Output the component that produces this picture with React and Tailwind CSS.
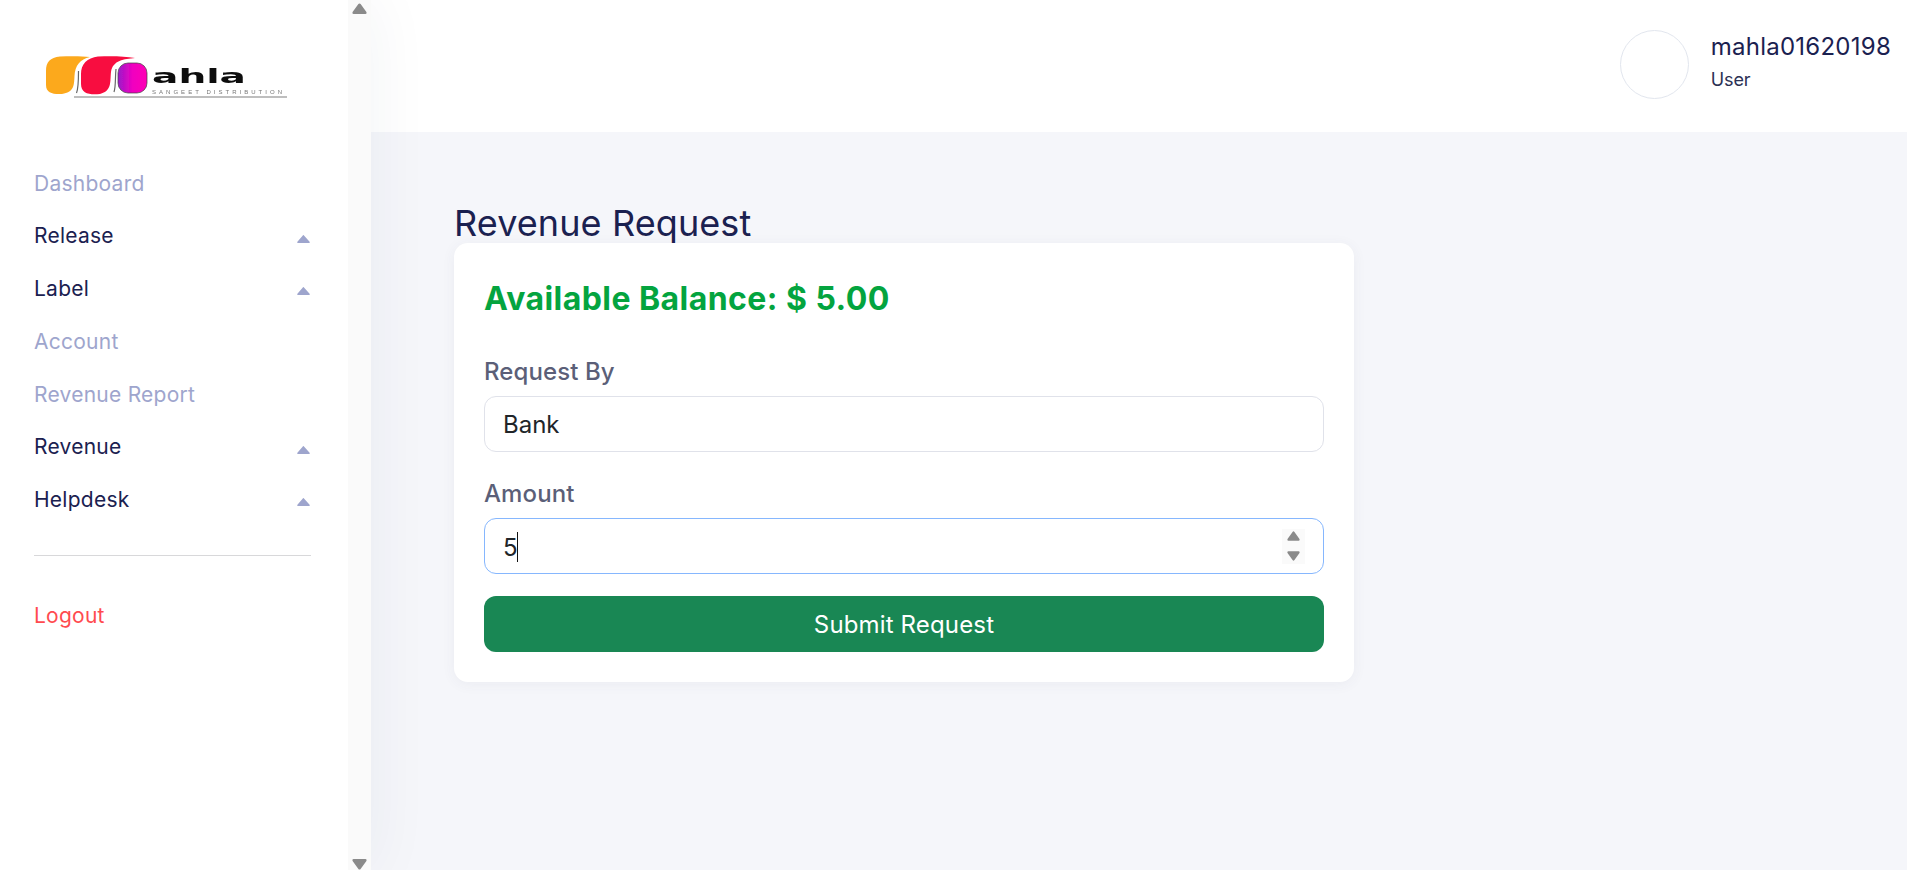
import React from "react";

function Logo() {
  return (
    <svg width="260" height="56" viewBox="34 46 260 56" className="block" aria-label="Mahla logo">
      <defs>
        <linearGradient id="mg" x1="0" x2="1" y1="0" y2="0">
          <stop offset="0" stopColor="#9b19c9" />
          <stop offset="0.5" stopColor="#f000c0" />
          <stop offset="1" stopColor="#ff00b4" />
        </linearGradient>
        <filter id="soft" x="-5%" y="-5%" width="110%" height="110%">
          <feGaussianBlur stdDeviation="0.6" />
        </filter>
      </defs>
      <g filter="url(#soft)">
        <path d="M60 56.5 C70 56 82 56 90 57 C80 59 75 66 74.5 76 C74 86 74 92 62 94 C53 94.5 46 93 46 85 L46 71 C46 62 50 57.5 60 56.5 Z" fill="#fca91f" />
        <path d="M76.5 93 C78.5 88 78.5 80 78.5 71" fill="none" stroke="#666" strokeWidth="1.2" />
        <path d="M98 56.5 C110 56 124 56 135 58 C124 59 113 60 111 72 C110 82 112 91 100 94 C90 95 81 94 81 84 L81 74 C81 64 87 58 98 56.5 Z" fill="#f8103f" />
        <path d="M114 92 C116 86 115 78 116 69" fill="none" stroke="#666" strokeWidth="1.2" />
        <rect x="118" y="63" width="29" height="30" rx="10" fill="url(#mg)" stroke="#444" strokeWidth="0.7" />
        <text x="152" y="83" fontFamily="'DejaVu Sans', sans-serif" fontWeight="700" fontSize="20" textLength="94" lengthAdjust="spacingAndGlyphs" fill="#111">ahla</text>
        <text x="152" y="94" fontFamily="'Liberation Sans', sans-serif" fontSize="6" textLength="130" lengthAdjust="spacing" fill="#777">SANGEET DISTRIBUTION</text>
        <path d="M74 97 H287" stroke="#a8a8a8" strokeWidth="1.5" />
      </g>
    </svg>
  );
}

function Caret({ className = "" }) {
  return (
    <svg width="13" height="8" viewBox="0 0 13 7" preserveAspectRatio="none" className={className}>
      <path d="M5.6 .6 a1 1 0 0 1 1.6 0 L12.6 6 q.4 1 -.6 1 H1 q-1 0 -.6 -1 Z" fill="#9ea5cd" />
    </svg>
  );
}

function Tri({ down = false, w = 15, h = 11, color = "#8a8a8a" }) {
  return (
    <svg width={w} height={h} viewBox="0 0 15 11" className={down ? "rotate-180" : ""}>
      <path d="M6.4 1 a1.3 1.3 0 0 1 2.2 0 L14.4 9 q.6 2 -1 2 H1.6 q-1.6 0 -1 -2 Z" fill={color} />
    </svg>
  );
}

function NavItem({ label, dropdown }) {
  return (
    <div className="flex h-[52.75px] items-center justify-between">
      <span className={`text-[21px] tracking-[0.25px] ${dropdown ? "text-[#1b2150]" : "text-[#9ea5cd]"}`}>{label}</span>
      {dropdown && <Caret className="mt-[5px] mr-px" />}
    </div>
  );
}

export default function App() {
  return (
    <div className="flex h-[870px] overflow-hidden bg-[#f5f6fa] font-['Inter',sans-serif]">
      <aside className="relative z-10 flex w-[371px] shrink-0 bg-white shadow-[0_0_60px_rgba(40,50,90,0.06)]">
        <div className="w-[348px] px-[34px] pt-[46px] pr-[37px]">
          <Logo />
          <nav className="mt-[55px]">
            <NavItem label="Dashboard" />
            <NavItem label="Release" dropdown />
            <NavItem label="Label" dropdown />
            <NavItem label="Account" />
            <NavItem label="Revenue Report" />
            <NavItem label="Revenue" dropdown />
            <NavItem label="Helpdesk" dropdown />
          </nav>
          <div className="mt-[29px] h-px bg-[#d8d8da]" />
          <div className="mt-[33px] flex h-[53px] items-center text-[21px] tracking-[0.25px] text-[#ff4b4f]">Logout</div>
        </div>
        <div className="flex w-[23px] flex-col items-center justify-between bg-[#fafafa] pt-[3px]">
          <Tri />
          <Tri down />
        </div>
      </aside>

      <div className="flex min-w-0 flex-1 flex-col">
        <header className="flex h-[132px] shrink-0 items-center justify-end bg-white pr-[16px]">
          <div className="mb-[3px] h-[69px] w-[69px] rounded-full border border-[#e2e6ee] bg-white" />
          <div className="mb-[9px] ml-[22px] flex flex-col">
            <span className="text-[24px] leading-[30px] tracking-[0.25px] text-[#1b2150]">mahla01620198</span>
            <span className="mt-[6px] text-[18px] leading-[24px] tracking-[-0.1px] text-[#2c3154]">User</span>
          </div>
        </header>

        <main className="pt-[70px] pl-[83px]">
          <h1 className="-mb-[2px] text-[36px] leading-[43px] tracking-[0.1px] text-[#1b2150]">Revenue Request</h1>
          <section className="w-[900px] rounded-[14px] bg-white p-[30px] shadow-[0_2px_14px_rgba(60,70,110,0.06)]">
            <div className="text-[32px] leading-[52px] font-bold tracking-[0.44px] text-[#04a43f]">Available Balance: $ 5.00</div>

            <label className="mt-[29px] mb-[6px] block text-[24px] leading-[36px] font-medium tracking-[0.1px] text-[#5b5f78]">Request By</label>
            <select className="block h-[56px] w-full appearance-none rounded-[12px] border border-[#e0e2ea] bg-white px-[18px] pt-[2px] text-[24px] text-[#212529] outline-none">
              <option>Bank</option>
            </select>

            <label className="mt-[24px] mb-[6px] block text-[24px] leading-[36px] font-medium tracking-[0.1px] text-[#5b5f78]">Amount</label>
            <div className="flex h-[56px] items-center rounded-[12px] border border-[#86b7fe] bg-white px-[18px]">
              <span className="pt-[3px] text-[24px] text-[#212529]">5</span>
              <span className="mt-[2px] -ml-px h-[30px] w-px bg-[#111]" />
              <div className="ml-auto flex h-[35px] w-[23px] flex-col items-center justify-center gap-[10px] bg-[#fafafa]">
                <Tri w={13} h={10} />
                <Tri w={13} h={10} down />
              </div>
            </div>

            <button className="mt-[22px] block h-[56px] w-full rounded-[12px] bg-[#198754] pt-[1px] text-[24px] tracking-[0.15px] text-white">Submit Request</button>
          </section>
        </main>
      </div>
    </div>
  );
}
